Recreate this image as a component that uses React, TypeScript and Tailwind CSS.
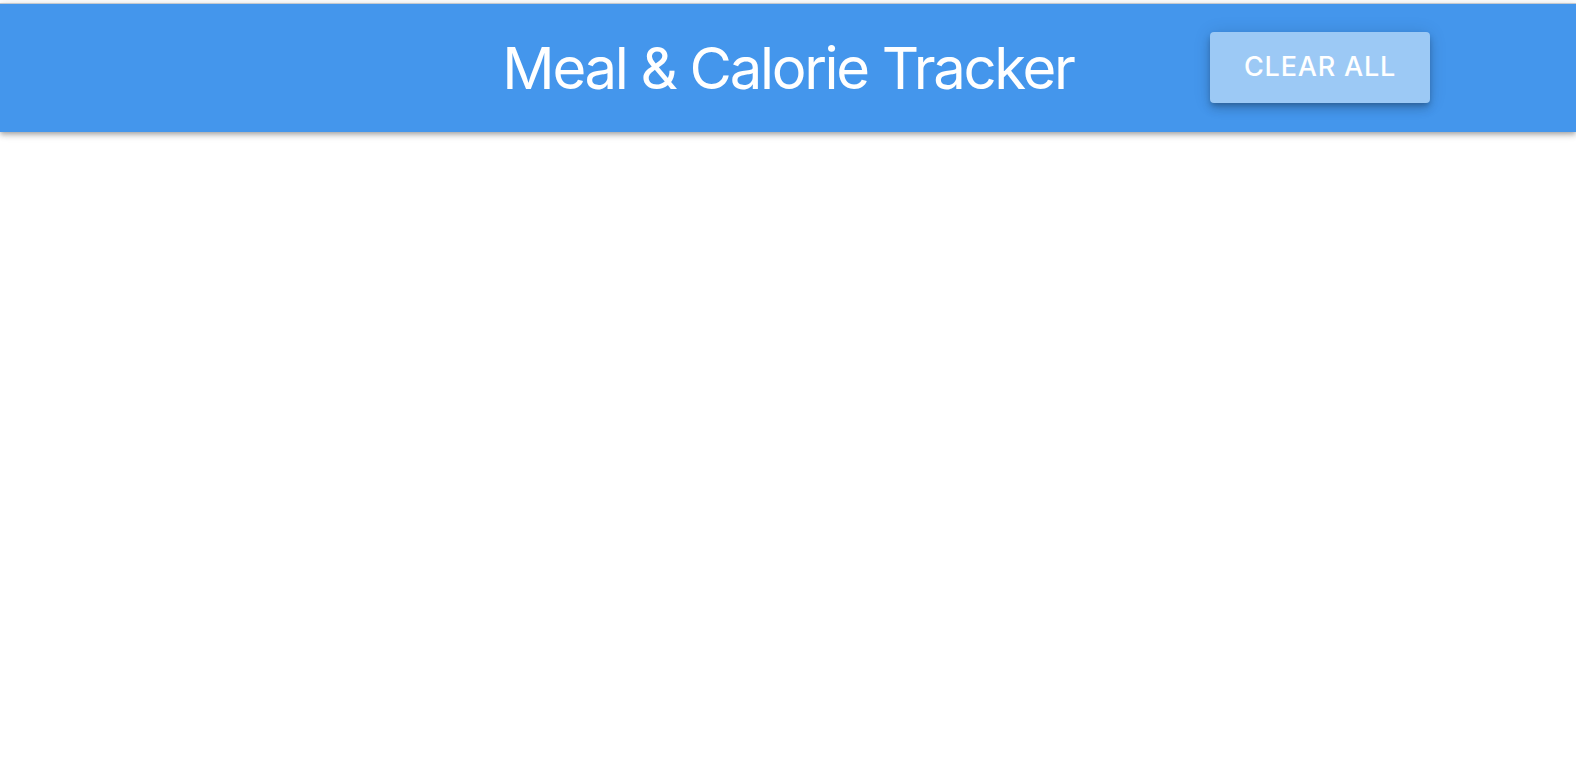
import React from 'react';

const App: React.FC = () => {
  const handleClear = () => {
    // nothing to clear yet
  };

  return (
    <div className="min-h-screen bg-white" style={{ fontFamily: 'Inter, "Noto Sans", sans-serif' }}>
      <header className="relative mt-[3px] h-[129px] border-t border-[#c4c9cf] bg-[#4496ec] shadow-[0_2px_4px_-1px_rgba(0,0,0,0.2),0_4px_5px_0_rgba(0,0,0,0.14),0_1px_10px_0_rgba(0,0,0,0.12)]">
        <div className="flex h-full items-center justify-center">
          <h1 className="text-[58px] font-normal leading-none tracking-[-2.3px] text-white">Meal &amp; Calorie Tracker</h1>
        </div>
        <button
          onClick={handleClear}
          className="absolute right-[146px] top-[28px] h-[71px] w-[220px] rounded-[4px] bg-[#9cc9f5] text-[27px] font-medium uppercase tracking-[0.8px] text-white shadow-[0_3px_5px_-1px_rgba(0,0,0,0.2),0_6px_10px_0_rgba(0,0,0,0.14),0_1px_18px_0_rgba(0,0,0,0.12)]"
        >
          Clear All
        </button>
      </header>
    </div>
  );
};

export default App;
